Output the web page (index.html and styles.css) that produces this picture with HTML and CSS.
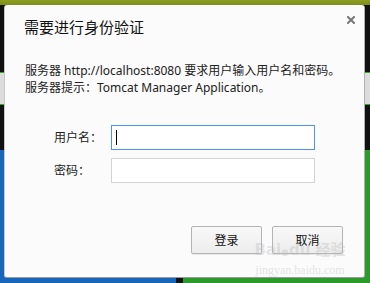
FILE: index.html
```html
<!DOCTYPE html>
<html lang="zh-CN">
<head>
<meta charset="utf-8">
<title>需要进行身份验证</title>
<link rel="stylesheet" href="styles.css">
</head>
<body>
<div class="desktop">
  <div class="dialog">
    <button class="close" aria-label="关闭">
      <svg width="8" height="8" viewBox="0 0 8 8"><path d="M1 1L7 7M7 1L1 7" stroke="#777" stroke-width="2" stroke-linecap="square"/></svg>
    </button>
    <h1 class="title">需要进行身份验证</h1>
    <p class="message">服务器 http://localhost:8080 要求用户输入用户名和密码。<br>服务器提示：Tomcat Manager Application。</p>
    <div class="form">
      <div class="row">
        <label class="label">用户名：</label>
        <div class="field">
          <input class="input focused" type="text">
          <span class="caret"></span>
        </div>
      </div>
      <div class="row">
        <label class="label">密码：</label>
        <div class="field">
          <input class="input" type="password">
        </div>
      </div>
    </div>
    <div class="actions">
      <button class="btn">登录</button>
      <button class="btn">取消</button>
    </div>
    <div class="watermark">
      <div class="wm-logo">Bai<span class="paw">●</span>du 经验</div>
      <div class="wm-url">jingyan.baidu.com</div>
    </div>
  </div>
</div>
</body>
</html>
```
FILE: styles.css
```css
html, body {
  margin: 0;
  padding: 0;
}
body {
  width: 370px;
  height: 283px;
  overflow: hidden;
  font-family: "Noto Sans", "Noto Sans CJK SC", sans-serif;
  color: #222;
}
.desktop {
  width: 370px;
  height: 283px;
  box-sizing: border-box;
  padding: 5px 5px 5px 4px;
  background:
    linear-gradient(#8c9d22, #7d8f1c) top / 100% 5px no-repeat,
    linear-gradient(#111, #111) 176px 0 / 7px 100% no-repeat,
    linear-gradient(to bottom, #111 0, #111 72px, #3aa322 72px, #3aa322 73px, #dcdcdc 73px, #dcdcdc 104px, #3aa322 104px, #3aa322 105px, #111 105px, #111 150px, #1766b9 150px) left / 176px 100% no-repeat,
    linear-gradient(to bottom, #111 0, #111 72px, #3aa322 72px, #3aa322 73px, #dcdcdc 73px, #dcdcdc 104px, #3aa322 104px, #3aa322 105px, #111 105px, #111 150px, #2a9a2a 150px) right / 187px 100% no-repeat;
}
.dialog {
  position: relative;
  width: 361px;
  height: 273px;
  box-sizing: border-box;
  background: #fbfbfb;
  border-radius: 3px;
  border-bottom: 1px solid #9a9a9a;
  border-right: 1px solid #b0b0b0;
  border-left: 1px solid #c8c8c8;
  padding: 12px 21px 0 19px;
  display: flex;
  flex-direction: column;
}
.close {
  position: absolute;
  top: 11px;
  right: 9px;
  width: 8px;
  height: 8px;
  padding: 0;
  border: 0;
  background: none;
  display: flex;
}
.title {
  margin: 0;
  font-size: 15px;
  font-weight: normal;
  line-height: 20px;
  color: #111;
}
.message {
  margin: 25px 0 0 1px;
  font-size: 12px;
  line-height: 17px;
  white-space: nowrap;
}
.form {
  margin: 29px 0 0 30px;
  display: flex;
  flex-direction: column;
  gap: 8px;
}
.row {
  display: flex;
  align-items: center;
}
.label {
  width: 57px;
  font-size: 12px;
  line-height: 17px;
}
.field {
  position: relative;
  display: flex;
}
.input {
  width: 204px;
  height: 25px;
  box-sizing: border-box;
  margin: 0;
  border: 1px solid #d4d4d4;
  background: #fff;
  outline: none;
  padding: 0 4px;
}
.input.focused {
  border-color: #4d90fe;
}
.caret {
  position: absolute;
  left: 5px;
  top: 5px;
  width: 1px;
  height: 15px;
  background: #000;
}
.actions {
  margin-top: 43px;
  display: flex;
  justify-content: flex-end;
  gap: 10px;
}
.btn {
  width: 71px;
  height: 28px;
  box-sizing: border-box;
  margin: 0;
  border: 1px solid #b4b4b4;
  border-radius: 2px;
  background: linear-gradient(#f8f8f8, #ededed);
  box-shadow: 0 1px 0 rgba(0,0,0,0.08);
  font-family: "Noto Sans", "Noto Sans CJK SC", sans-serif;
  font-size: 12px;
  color: #111;
  padding: 0;
}
.watermark {
  position: absolute;
  left: 249px;
  top: 234px;
  width: 92px;
  color: rgba(190, 190, 190, 0.4);
  text-align: center;
  pointer-events: none;
}
.wm-logo {
  font-family: "DejaVu Sans", "Noto Sans CJK SC", sans-serif;
  font-weight: bold;
  font-size: 15px;
  line-height: 22px;
  white-space: nowrap;
}
.paw {
  font-size: 9px;
}
.wm-url {
  font-family: "Liberation Serif", serif;
  font-size: 12px;
  line-height: 14px;
}
```
